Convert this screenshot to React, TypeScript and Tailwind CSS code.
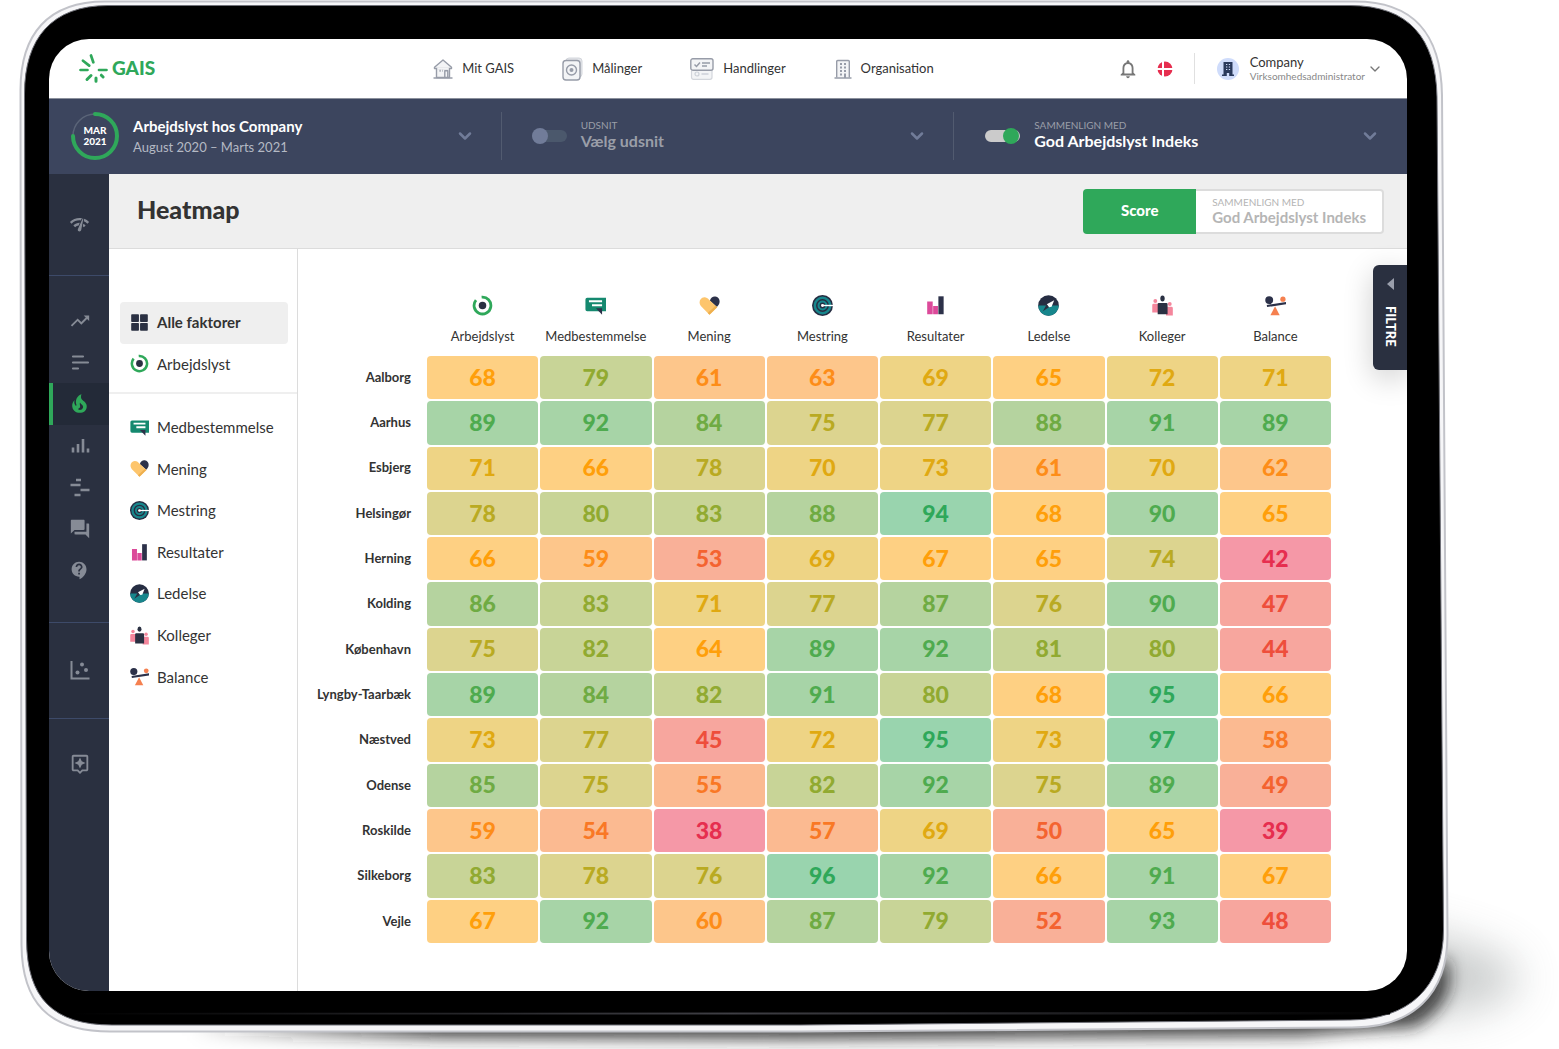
import { useState } from "react";
import type { ReactNode } from "react";
import {
  MdNetworkCheck,
  MdTrendingUp,
  MdNotificationsNone,
  MdQuestionAnswer,
  MdContactSupport,
  MdOutlineAssistant,
} from "react-icons/md";
import { ChevronDown } from "lucide-react";
import clsx from "clsx";

type IconProps = { className?: string };

/* ---------- factor icons ---------- */

const ArbejdslystIcon = ({ className }: IconProps) => (
  <svg viewBox="0 0 24 24" className={className} fill="none" aria-hidden="true">
    <path d="M11 2.500A9.600 9.600 0 1 1 4.600 5.900" stroke="#2fa85a" strokeWidth="3.200" />
    <circle cx="12" cy="12" r="4.300" fill="#2a3042" />
  </svg>
);

const MedbestemmelseIcon = ({ className }: IconProps) => (
  <svg viewBox="0 0 24 24" className={className} aria-hidden="true">
    <path d="M2.500 3H24v15.500H2.500a2 2 0 0 1-2-2V5a2 2 0 0 1 2-2z" fill="#15896f" />
    <path d="M12.500 15h7v7.500z" fill="#2c3149" />
    <path d="M4.500 6h15v2.300h-15zM8 10.500h11.500v2.300H8z" fill="#fff" />
  </svg>
);

const MeningIcon = ({ className }: IconProps) => (
  <svg viewBox="0 0 24 24" className={className} aria-hidden="true">
    <path d="M12.500 6.500a5.400 5.400 0 0 1 11 1.400c0 2-1.200 3.900-3.100 5.700z" fill="#2c3149" />
    <path d="M12 22.500 2.400 12.900C-1 9 .8 2.800 6 2.500c2.400-.1 3.800 1 5.200 2.500l9.600 8.900z" fill="#fdc56c" />
    <path d="m12 22.500-2-2 8.900-8.300 1.900 1.700z" fill="#eeb04f" />
  </svg>
);

const MestringIcon = ({ className }: IconProps) => (
  <svg viewBox="0 0 24 24" className={className} fill="none" aria-hidden="true">
    <circle cx="12" cy="12" r="12" fill="#262d42" />
    <circle cx="12" cy="12" r="8.800" stroke="#17868c" strokeWidth="2.800" />
    <circle cx="12" cy="12" r="4.500" stroke="#17868c" strokeWidth="2.400" />
    <circle cx="12" cy="12" r="1.700" fill="#fff" />
    <path d="M12 12h12" stroke="#fff" strokeWidth="1.600" />
  </svg>
);

const ResultaterIcon = ({ className }: IconProps) => (
  <svg viewBox="0 0 24 24" className={className} aria-hidden="true">
    <path d="M2.500 7.500h6.300V22H2.500zM9.300 12.500h5.500V22H9.300z" fill="#dc4a9a" />
    <path d="M15.300 1.500h6V22h-6z" fill="#2c3149" />
  </svg>
);

const LedelseIcon = ({ className }: IconProps) => (
  <svg viewBox="0 0 24 24" className={className} aria-hidden="true">
    <circle cx="12" cy="12" r="11.800" fill="#262d42" />
    <path d="M.2 12a11.800 11.800 0 0 0 23.600 0z" fill="#17868c" />
    <path d="M18.500 6 15.500 13.500 12.500 14 10 10.500z" fill="#fff" />
    <path d="m5.500 18.500 4.500-8 2.500 3.500z" fill="#2a3042" />
  </svg>
);

const KollegerIcon = ({ className }: IconProps) => (
  <svg viewBox="0 0 24 24" className={className} aria-hidden="true">
    <circle cx="3.800" cy="6.800" r="2.200" fill="#f4869c" />
    <circle cx="20.300" cy="10.300" r="2.200" fill="#f4869c" />
    <path d="M.3 11.500a1.500 1.500 0 0 1 1.500-1.500H8v10H.3zM16 13.500h6.300a1.500 1.500 0 0 1 1.500 1.500v8.300H16z" fill="#f4869c" />
    <ellipse cx="12" cy="4" rx="2.500" ry="3.400" fill="#2a3042" />
    <path d="M6.500 10.300A1.300 1.300 0 0 1 7.800 9h8.700a1.300 1.300 0 0 1 1.300 1.300V22H6.500z" fill="#2a3042" />
  </svg>
);

const BalanceIcon = ({ className }: IconProps) => (
  <svg viewBox="0 0 24 24" className={className} aria-hidden="true">
    <circle cx="4.800" cy="5.800" r="4.500" fill="#2c3149" />
    <circle cx="20.500" cy="4.800" r="3" fill="#f5804f" />
    <path d="M2 11.300 24 8v2.600L2.400 13.800z" fill="#2c3149" />
    <path d="M11.500 12.800 16.800 23H6.200z" fill="#f5804f" />
  </svg>
);

const AllIcon = ({ className }: IconProps) => (
  <svg viewBox="0 0 24 24" className={className} fill="#2a3042" aria-hidden="true">
    <rect x="1.500" y="1.500" width="9.800" height="9.800" rx="1" />
    <rect x="12.700" y="1.500" width="9.800" height="9.800" rx="1" />
    <rect x="1.500" y="12.700" width="9.800" height="9.800" rx="1" />
    <rect x="12.700" y="12.700" width="9.800" height="9.800" rx="1" />
  </svg>
);

/* ---------- top navigation icons ---------- */

const HomeIcon = () => (
  <svg width="20" height="20" viewBox="0 0 20 20" fill="none" stroke="#979ca8" strokeWidth="1.400" strokeLinejoin="round" aria-hidden="true">
    <path d="M3.500 9v9.500h13V9" fill="#f3f4f6" />
    <path d="M1.500 9.500v-1.200L10 1l8.500 7.300v1.200z" fill="#f3f4f6" />
    <path d="M4.200 9.500h11.600" stroke="#f3f4f6" strokeWidth="2" />
    <path d="M.5 19h19" strokeWidth="1.600" />
    <path d="M11.800 18.500v-6.700h3v6.700" />
    <path d="M6.500 11.800h1.200M9 11.800h.6" strokeWidth="2" />
  </svg>
);

const TargetCardIcon = () => (
  <svg width="21" height="24" viewBox="0 0 21 24" fill="none" aria-hidden="true">
    <rect x="4" y="1" width="16" height="19" rx="3" fill="#e3e5e9" stroke="#d3d6dc" />
    <rect x="1" y="3.500" width="17" height="19.500" rx="3" fill="#f3f4f6" stroke="#979ca8" strokeWidth="1.400" />
    <circle cx="9.500" cy="13" r="5" stroke="#979ca8" strokeWidth="1.400" />
    <circle cx="9.500" cy="13" r="2" fill="#979ca8" />
  </svg>
);

const TaskIcon = () => (
  <svg width="24" height="22" viewBox="0 0 24 22" fill="none" aria-hidden="true">
    <rect x="1.500" y="11" width="20.500" height="10.300" rx="2" fill="#f3f4f6" stroke="#d3d6dc" strokeWidth="1.200" />
    <circle cx="7" cy="16" r="2" stroke="#cdd1d8" strokeWidth="1.200" />
    <path d="M11.500 16h7" stroke="#cdd1d8" strokeWidth="1.400" />
    <rect x=".8" y=".8" width="22.200" height="11.400" rx="2" fill="#f3f4f6" stroke="#979ca8" strokeWidth="1.400" />
    <path d="m4.500 6.500 2 2 3.500-4M12 5h8M12 8h5" stroke="#979ca8" strokeWidth="1.500" />
  </svg>
);

const BuildingIcon = () => (
  <svg width="18" height="20" viewBox="0 0 18 20" fill="none" stroke="#979ca8" aria-hidden="true">
    <path d="M2.700 18.500v-16a1 1 0 0 1 1-1h10.600a1 1 0 0 1 1 1v16" fill="#f3f4f6" strokeWidth="1.400" />
    <path d="M.5 19h17" strokeWidth="1.600" />
    <path d="M6 5h2M10 5h2M6 8.500h2M10 8.500h2M6 12h2M10 12h2M6 15.500h2" strokeWidth="2" />
    <path d="M11 14.500V19" strokeWidth="2" />
  </svg>
);

const LogoMark = () => (
  <svg width="29" height="30" viewBox="0 0 29 30" stroke="#2fa85a" strokeLinecap="round" fill="none" aria-hidden="true">
    <path d="m12 1.500 2.300 6.800M4 6.700l6.200 4.900M1.500 16h7M20 16h7.500" strokeWidth="2.700" />
    <path d="m8 25.500 4-4M17 24v3.300M22.300 21.200l1.800 1.800" strokeWidth="3" />
  </svg>
);

/* ---------- side rail icons ---------- */

const RailIcon = ({ children }: { children: ReactNode }) => (
  <svg width="20" height="20" viewBox="0 0 20 20" fill="none" stroke="currentColor" strokeWidth="2" aria-hidden="true">
    {children}
  </svg>
);

const FlameIcon = () => (
  <svg width="25" height="25" viewBox="0 0 24 24" fill="currentColor" aria-hidden="true">
    <path d="M17.660 11.200C17.430 10.900 17.150 10.640 16.890 10.380C16.220 9.780 15.460 9.350 14.820 8.720C13.330 7.260 13 4.850 13.950 3C13 3.230 12.170 3.750 11.460 4.320C8.870 6.400 7.850 10.070 9.070 13.220C9.110 13.320 9.150 13.420 9.150 13.550C9.150 13.770 9 13.970 8.800 14.050C8.570 14.150 8.330 14.090 8.140 13.930C8.080 13.880 8.040 13.830 8 13.760C6.870 12.330 6.690 10.280 7.450 8.640C5.780 10 4.870 12.300 5 14.470C5.060 14.970 5.120 15.470 5.290 15.970C5.430 16.570 5.700 17.170 6 17.700C7.080 19.430 8.950 20.670 10.960 20.920C13.100 21.190 15.390 20.800 17.030 19.320C18.860 17.660 19.500 15 18.560 12.720L18.430 12.460C18.220 12 17.660 11.200 17.660 11.200M14.500 17.500C14.220 17.740 13.760 18 13.400 18.100C12.280 18.500 11.160 17.940 10.500 17.280C11.690 17 12.400 16.120 12.610 15.230C12.780 14.430 12.460 13.770 12.330 13C12.210 12.260 12.230 11.630 12.500 10.940C12.690 11.320 12.890 11.700 13.130 12C13.900 13 15.110 13.440 15.370 14.800C15.410 14.940 15.430 15.080 15.430 15.230C15.460 16.050 15.100 16.950 14.500 17.500Z" />
  </svg>
);

const railTop = [
  { label: "Udvikling", icon: <MdTrendingUp size={22} /> },
  {
    label: "Fordeling",
    icon: (
      <RailIcon>
        <path d="M3 4.500h10M3 10.500h15M3 16.500h5" strokeWidth="2.200" strokeLinecap="round" />
      </RailIcon>
    ),
  },
  { label: "Heatmap", icon: <FlameIcon />, active: true },
  {
    label: "Resultater",
    icon: (
      <RailIcon>
        <path d="M3 16.500v-5M8 16.500V8M13 16.500V3M18 16.500v-4" strokeWidth="2.600" />
      </RailIcon>
    ),
  },
  {
    label: "Spredning",
    icon: (
      <RailIcon>
        <path d="M6 3h5M.5 8h10M10.500 13h9M4.500 18h6" strokeWidth="2.600" />
      </RailIcon>
    ),
  },
  { label: "Kommentarer", icon: <MdQuestionAnswer size={22} /> },
  { label: "Spørgsmål", icon: <MdContactSupport size={21} /> },
];

/* ---------- data ---------- */

const factors = [
  { name: "Arbejdslyst", Icon: ArbejdslystIcon },
  { name: "Medbestemmelse", Icon: MedbestemmelseIcon },
  { name: "Mening", Icon: MeningIcon },
  { name: "Mestring", Icon: MestringIcon },
  { name: "Resultater", Icon: ResultaterIcon },
  { name: "Ledelse", Icon: LedelseIcon },
  { name: "Kolleger", Icon: KollegerIcon },
  { name: "Balance", Icon: BalanceIcon },
];

const rows = [
  { city: "Aalborg", scores: [68, 79, 61, 63, 69, 65, 72, 71] },
  { city: "Aarhus", scores: [89, 92, 84, 75, 77, 88, 91, 89] },
  { city: "Esbjerg", scores: [71, 66, 78, 70, 73, 61, 70, 62] },
  { city: "Helsingør", scores: [78, 80, 83, 88, 94, 68, 90, 65] },
  { city: "Herning", scores: [66, 59, 53, 69, 67, 65, 74, 42] },
  { city: "Kolding", scores: [86, 83, 71, 77, 87, 76, 90, 47] },
  { city: "København", scores: [75, 82, 64, 89, 92, 81, 80, 44] },
  { city: "Lyngby-Taarbæk", scores: [89, 84, 82, 91, 80, 68, 95, 66] },
  { city: "Næstved", scores: [73, 77, 45, 72, 95, 73, 97, 58] },
  { city: "Odense", scores: [85, 75, 55, 82, 92, 75, 89, 49] },
  { city: "Roskilde", scores: [59, 54, 38, 57, 69, 50, 65, 39] },
  { city: "Silkeborg", scores: [83, 78, 76, 96, 92, 66, 91, 67] },
  { city: "Vejle", scores: [67, 92, 60, 87, 79, 52, 93, 48] },
];

const scale = [
  { min: 94, tone: "bg-[#99d4ae] text-[#2fa85a]" },
  { min: 89, tone: "bg-[#a7d4a7] text-[#4fab4f]" },
  { min: 84, tone: "bg-[#b5d39f] text-[#6fab43]" },
  { min: 79, tone: "bg-[#c8d497] text-[#91aa31]" },
  { min: 74, tone: "bg-[#dcd48f] text-[#b9aa22]" },
  { min: 69, tone: "bg-[#eed485] text-[#e0a912]" },
  { min: 64, tone: "bg-[#fed083] text-[#ff9f0a]" },
  { min: 59, tone: "bg-[#fdc68b] text-[#fd8d19]" },
  { min: 54, tone: "bg-[#fbba91] text-[#f97825]" },
  { min: 49, tone: "bg-[#f9b098] text-[#f46330]" },
  { min: 44, tone: "bg-[#f7a69e] text-[#ee4e3b]" },
  { min: 0, tone: "bg-[#f598a7] text-[#e62e4f]" },
];

const toneFor = (score: number) => scale.find((s) => score >= s.min)!.tone;

/* ---------- parts ---------- */

const TabletFrame = () => (
  <svg viewBox="0 0 1559 1049" preserveAspectRatio="none" className="absolute inset-0 h-full w-full" aria-hidden="true">
    <defs>
      <filter id="soft" x="-20%" y="-60%" width="140%" height="220%">
        <feGaussianBlur stdDeviation="8" />
      </filter>
      <filter id="wide" x="-60%" y="-60%" width="220%" height="220%">
        <feGaussianBlur stdDeviation="22" />
      </filter>
      <linearGradient id="edge" x1="0" x2="1" y1="0" y2="0">
        <stop offset="0" stopColor="#000" />
        <stop offset=".5" stopColor="#3f3f45" />
        <stop offset="1" stopColor="#000" />
      </linearGradient>
      <linearGradient id="fade" x1="0" x2="1" y1="0" y2="0">
        <stop offset="0" stopColor="#222" stopOpacity="0" />
        <stop offset=".2" stopColor="#222" stopOpacity=".9" />
        <stop offset="1" stopColor="#222" stopOpacity=".8" />
      </linearGradient>
    </defs>
    <path d="M1380 920 L1450 940 Q1535 960 1515 990 Q1480 1020 1380 1015z" fill="#8c9292" opacity=".45" filter="url(#wide)" />
    <path d="M190 1000 H1410 L1445 955 Q1462 1000 1415 1027 L1300 1036 L800 1039 L190 1036z" fill="url(#fade)" filter="url(#soft)" />
    <path
      d="M105 1.500 H1355 C1415 1.500 1441 35 1442 95 L1447.500 935 C1447.500 995 1412 1027.500 1352 1027.500 L800 1031.500 H110 C48 1031.500 22 1002 21.500 945 L20.500 90 C20.500 34 48 1.500 105 1.500z"
      fill="#f6f6f8"
      stroke="#c2c3c9"
      strokeWidth="2"
    />
    <path
      d="M108 5.500 H1350 C1409 5.500 1436 38 1437 97 L1443.500 930 C1443.500 988 1408 1019.500 1350 1020 L800 1025 H112 C53 1025 27 998 26.500 940 L24.500 94 C24.500 38 52 5.500 108 5.500z"
      stroke="#6f7078"
      strokeWidth="1"
    />
    <path d="M70 1013 L1390 1012 V1014.500 L70 1014.500z" fill="url(#edge)" />
  </svg>
);

const Switch = ({ label, checked, onChange }: { label: string; checked: boolean; onChange: (v: boolean) => void }) => (
  <label className="relative flex h-4 w-[35px] shrink-0 cursor-pointer items-center">
    <input
      type="checkbox"
      role="switch"
      aria-label={label}
      checked={checked}
      onChange={(e) => onChange(e.target.checked)}
      className="peer sr-only"
    />
    <span className="h-3 w-full rounded-full bg-[#4b586c] peer-checked:bg-[#cbcbcb]" />
    <span className="absolute left-0 size-4 rounded-full bg-[#717c99] peer-checked:left-[18px] peer-checked:bg-[#2fa85a]" />
  </label>
);

const TopNavLink = ({ icon, children }: { icon: ReactNode; children: ReactNode }) => (
  <a href="#" className="flex items-center gap-[9px] text-[13px] text-[#333]">
    {icon}
    {children}
  </a>
);

const RailButton = ({ label, icon, active }: { label: string; icon: ReactNode; active?: boolean }) => (
  <button
    type="button"
    aria-label={label}
    className={clsx(
      "flex w-full flex-1 items-center justify-center border-l-4 pr-[3px]",
      active ? "border-[#2fa85a] bg-[#232a38] text-[#2fa85a]" : "border-transparent text-[#868b96]"
    )}
  >
    {icon}
  </button>
);

const App = () => {
  const [segment, setSegment] = useState<boolean>(false);
  const [compare, setCompare] = useState<boolean>(true);
  const [selected, setSelected] = useState<string>("Alle faktorer");

  const factorButton = (name: string, Icon: (p: IconProps) => ReactNode) => (
    <button
      key={name}
      type="button"
      onClick={() => setSelected(name)}
      className={clsx(
        "flex w-full flex-1 items-center gap-2 rounded pb-px pl-[10px] text-[15px] text-[#333]",
        selected === name && "bg-[#efefef] font-bold"
      )}
    >
      <Icon className="size-[19px]" />
      {name}
    </button>
  );

  return (
    <div className="relative flex min-h-screen bg-white pt-[39px] pr-[152px] pb-[58px] pl-[49px] font-['Lato','Liberation_Sans',sans-serif]">
      <TabletFrame />
      <div className="relative flex flex-1 flex-col overflow-hidden rounded-[40px] bg-white">
        <header className="flex h-[59px] shrink-0 items-center pr-6 pl-[30px]">
          <a href="#" className="flex items-center gap-1 text-[19px] font-black text-[#2fa85a]">
            <LogoMark />
            GAIS
          </a>
          <nav className="ml-[278px] flex items-center gap-12">
            <TopNavLink icon={<HomeIcon />}>Mit GAIS</TopNavLink>
            <TopNavLink icon={<TargetCardIcon />}>Målinger</TopNavLink>
            <TopNavLink icon={<TaskIcon />}>Handlinger</TopNavLink>
            <TopNavLink icon={<BuildingIcon />}>Organisation</TopNavLink>
          </nav>
          <div className="ml-auto flex items-center">
            <button type="button" aria-label="Notifikationer" className="text-[#777]">
              <MdNotificationsNone size={22} />
            </button>
            <button type="button" aria-label="Dansk" className="ml-[18px]">
              <svg width="16" height="16" viewBox="0 0 16 16" aria-hidden="true">
                <circle cx="8" cy="8" r="7.500" fill="#e62e4f" />
                <path d="M6 0v16M0 8h16" stroke="#fff" strokeWidth="2" />
              </svg>
            </button>
            <button type="button" className="ml-[21px] flex h-[31px] items-center border-l border-[#e0e0e0] pl-[22px] text-left">
              <span className="flex size-[22px] items-center justify-center rounded-full bg-[#cfdcfb] text-[#2a3a5c]">
                <svg width="12" height="14" viewBox="0 0 12 14" aria-hidden="true">
                  <path d="M1.500 0h9v12.500H12V14H7.200v-3H4.800v3H0v-1.500h1.500z" fill="currentColor" />
                  <path d="M4 2.500h1.300M6.800 2.500h1.300M4 5h1.300M6.800 5h1.300M4 7.500h1.300M6.800 7.500h1.300" stroke="#cfdcfb" strokeWidth="1.200" />
                </svg>
              </span>
              <span className="ml-[11px] block pb-[2px]">
                <span className="block text-[13px] leading-4 text-[#333]">Company</span>
                <span className="block text-[10px] leading-3 text-[#888]">Virksomhedsadministrator</span>
              </span>
              <ChevronDown size={16} className="ml-[2px] text-[#777]" />
            </button>
          </div>
        </header>

        <section className="grid h-[76px] shrink-0 grid-cols-3 border-t border-[#8b909c] bg-[#3c455e] pt-[13px] pb-[15px] text-white">
          <button type="button" className="flex items-center border-r border-[#525b70] pr-[26px] pl-[22px] text-left">
            <span className="relative flex size-12 items-center justify-center text-center text-[10px] leading-[11px] font-black">
              <svg viewBox="0 0 48 48" fill="none" className="absolute inset-0" aria-hidden="true">
                <circle cx="24" cy="24" r="22" stroke="#596377" strokeWidth="1.500" />
                <path d="M24 2A22 22 0 1 1 2 24" stroke="#2fa85a" strokeWidth="4" strokeLinecap="round" />
              </svg>
              MAR
              <br />
              2021
            </span>
            <span className="ml-[14px] block">
              <span className="block text-[15px] leading-[21px] font-bold">Arbejdslyst hos Company</span>
              <span className="block text-[13px] leading-5 text-[#b4b9c4]">August 2020 – Marts 2021</span>
            </span>
            <ChevronDown size={20} strokeWidth={3} className="ml-auto text-[#717c99]" />
          </button>
          <div className="flex items-center border-r border-[#525b70] pr-[26px] pl-[30px]">
            <Switch label="Udsnit" checked={segment} onChange={setSegment} />
            <button type="button" className="ml-[14px] flex flex-1 items-center text-left text-[#9a9ea8]">
              <span className="pb-[2px]">
                <span className="block text-[10px] leading-3">UDSNIT</span>
                <span className="block text-[16px] leading-5 font-bold">Vælg udsnit</span>
              </span>
              <ChevronDown size={20} strokeWidth={3} className="ml-auto text-[#717c99]" />
            </button>
          </div>
          <div className="flex items-center pr-[27px] pl-[31px]">
            <Switch label="Sammenlign med" checked={compare} onChange={setCompare} />
            <button type="button" className="ml-[14px] flex flex-1 items-center text-left">
              <span className="pb-[2px]">
                <span className="block text-[10px] leading-3 text-[#9a9ea8]">SAMMENLIGN MED</span>
                <span className="block text-[16px] leading-5 font-bold">God Arbejdslyst Indeks</span>
              </span>
              <ChevronDown size={20} strokeWidth={3} className="ml-auto text-[#717c99]" />
            </button>
          </div>
        </section>

        <div className="flex flex-1">
          <aside className="flex w-[60px] shrink-0 flex-col bg-[#2a3040]">
            <div className="flex h-[102px] border-b border-[#3d4a69]">
              <RailButton label="Overblik" icon={<MdNetworkCheck size={21} />} />
            </div>
            <div className="flex h-[347px] flex-col border-b border-[#3d4a69] pt-6 pb-[31px]">
              {railTop.map((item) => (
                <RailButton key={item.label} {...item} />
              ))}
            </div>
            <div className="flex h-[96px] border-b border-[#3d4a69]">
              <RailButton
                label="Korrelation"
                icon={
                  <RailIcon>
                    <path d="M1.500 0v17.500H19.500" />
                    <g fill="currentColor" stroke="none">
                      <circle cx="7.500" cy="11.500" r="2" />
                      <circle cx="12" cy="3.500" r="2" />
                      <circle cx="16" cy="9" r="2" />
                    </g>
                  </RailIcon>
                }
              />
            </div>
            <div className="flex h-[90px]">
              <RailButton label="Anbefalinger" icon={<MdOutlineAssistant size={22} />} />
            </div>
          </aside>

          <main className="flex flex-1 flex-col">
            <div className="flex h-[75px] shrink-0 items-center justify-between border-b border-[#dcdcdc] bg-[#efefef] pr-[23px] pl-7">
              <h1 className="pb-1 text-[25px] leading-8 font-black text-[#333]">Heatmap</h1>
              <div className="flex h-[45px]">
                <button type="button" className="w-[113px] rounded-l bg-[#2fa85a] pb-px text-[15px] font-black text-white">
                  Score
                </button>
                <button type="button" className="rounded-r border-2 border-l-0 border-[#dcdcdc] bg-white px-4 text-left text-[#b5b5b5]">
                  <span className="block text-[10px] leading-3">SAMMENLIGN MED</span>
                  <span className="block text-[15px] leading-[18px] font-bold">God Arbejdslyst Indeks</span>
                </button>
              </div>
            </div>

            <div className="relative flex flex-1">
              <div className="w-[189px] shrink-0 border-r border-[#dcdcdc] pt-[53px]">
                <div className="flex h-[92px] flex-col border-b-2 border-[#efefef] pr-[9px] pb-[7px] pl-[11px]">
                  {factorButton("Alle faktorer", AllIcon)}
                  {factorButton("Arbejdslyst", ArbejdslystIcon)}
                </div>
                <div className="mt-[13px] flex h-[291px] flex-col pr-[9px] pl-[11px]">
                  {factors.slice(1).map((f) => factorButton(f.name, f.Icon))}
                </div>
              </div>

              <div className="flex-1 pr-[74px]">
                <table className="h-[696px] w-full table-fixed border-separate border-spacing-[2px]">
                  <thead>
                    <tr className="h-[103px]">
                      <td className="w-[125px]" />
                      {factors.map(({ name, Icon }) => (
                        <th key={name} scope="col" className="pb-2 align-bottom text-[13px] leading-5 font-normal text-[#333]">
                          <Icon className="mx-auto mb-[10px] size-[21px]" />
                          {name}
                        </th>
                      ))}
                    </tr>
                  </thead>
                  <tbody>
                    {rows.map((row) => (
                      <tr key={row.city}>
                        <th scope="row" className="pr-[14px] text-right text-[13px] font-bold text-[#333]">
                          {row.city}
                        </th>
                        {row.scores.map((score, i) => (
                          <td key={i} className={clsx("rounded pb-[2px] text-center text-[23px] leading-7 font-black", toneFor(score))}>
                            {score}
                          </td>
                        ))}
                      </tr>
                    ))}
                  </tbody>
                </table>
              </div>

              <button
                type="button"
                className="absolute top-4 right-0 flex h-[105px] w-[34px] flex-col items-center rounded-l-md bg-[#2a3040] pt-[13px] pl-[2px] text-white shadow-[0_8px_30px_rgba(0,0,0,0.2)]"
              >
                <svg width="8" height="12" viewBox="0 0 8 12" aria-hidden="true">
                  <path d="M7 0v12L0 6z" fill="#9a9fac" />
                </svg>
                <span className="mt-4 text-[13px] leading-4 font-black [writing-mode:vertical-rl]">FILTRE</span>
              </button>
            </div>
          </main>
        </div>
      </div>
    </div>
  );
};

export default App;
